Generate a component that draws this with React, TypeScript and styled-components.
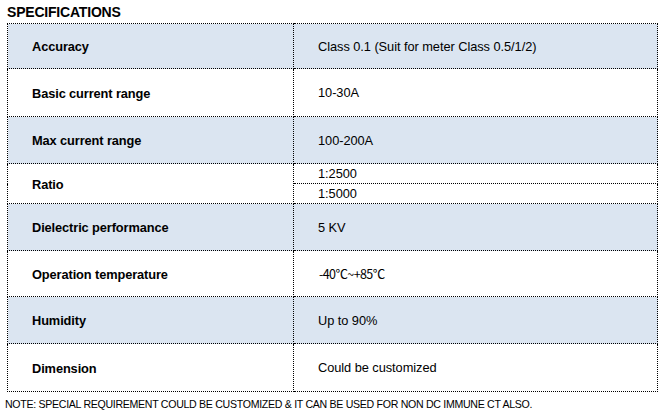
import * as React from "react";
import styled, { createGlobalStyle } from "styled-components";

const GlobalStyle = createGlobalStyle`
  html, body {
    margin: 0;
    padding: 0;
    background: #ffffff;
  }
  body {
    font-family: "Liberation Sans", Arial, sans-serif;
    color: #000;
  }
`;

const SPage = styled.div`
  width: 667px;
  height: 414px;
  padding: 4px 0 0 7px;
  box-sizing: border-box;
  overflow: hidden;
`;

const STitle = styled.h2`
  margin: 0 0 3px;
  font-size: 14px;
  font-weight: bold;
  line-height: 16px;
  letter-spacing: -0.2px;
`;

const STable = styled.table`
  border-collapse: collapse;
  width: 651px;
  table-layout: fixed;
`;

interface IRowStyle {
  shaded?: boolean;
}

const SRow = styled.tr<IRowStyle>`
  background: ${({ shaded }) => (shaded ? "#dbe5f1" : "#ffffff")};
`;

interface ICellStyle {
  h?: number;
}

const SLabel = styled.td<ICellStyle>`
  width: 286px;
  height: ${({ h }) => h || 46}px;
  padding: 1px 0 0 24px;
  box-sizing: border-box;
  border: 1px dotted #000;
  font-size: 12.8px;
  font-weight: bold;
  letter-spacing: -0.1px;
`;

const SValue = styled.td<ICellStyle>`
  height: ${({ h }) => h || 46}px;
  padding: 1px 0 0 24px;
  box-sizing: border-box;
  border: 1px dotted #000;
  font-size: 12.8px;
  line-height: 14px;
  letter-spacing: -0.05px;
`;

const STemp = styled.span`
  font-family: "Noto Sans CJK SC", "DejaVu Sans", sans-serif;
  font-size: 12.5px;
  letter-spacing: -0.6px;
  padding-left: 1px;
`;

const SNote = styled.p`
  margin: 6px 0 0 -2px;
  font-size: 10.6px;
  letter-spacing: -0.3px;
  line-height: 12px;
`;

interface ISpec {
  label: string;
  value: React.ReactNode;
  h: number;
}

const specs: ISpec[] = [
  { label: "Accuracy", value: "Class 0.1 (Suit for meter Class 0.5/1/2)", h: 45 },
  { label: "Basic current range", value: "10-30A", h: 48 },
  { label: "Max current range", value: "100-200A", h: 47 },
];

const specsAfter: ISpec[] = [
  { label: "Dielectric performance", value: "5 KV", h: 47 },
  { label: "Operation temperature", value: <STemp>-40℃~+85℃</STemp>, h: 46 },
  { label: "Humidity", value: "Up to 90%", h: 47 },
  { label: "Dimension", value: "Could be customized", h: 48 },
];

const App = () => (
  <SPage>
    <GlobalStyle />
    <STitle>SPECIFICATIONS</STitle>
    <STable>
      <tbody>
        {specs.map((s, i) => (
          <SRow key={s.label} shaded={i % 2 === 0}>
            <SLabel h={s.h}>{s.label}</SLabel>
            <SValue h={s.h}>{s.value}</SValue>
          </SRow>
        ))}
        <SRow>
          <SLabel rowSpan={2} h={40}>
            Ratio
          </SLabel>
          <SValue h={20}>1:2500</SValue>
        </SRow>
        <SRow>
          <SValue h={20}>1:5000</SValue>
        </SRow>
        {specsAfter.map((s, i) => (
          <SRow key={s.label} shaded={i % 2 === 0}>
            <SLabel h={s.h}>{s.label}</SLabel>
            <SValue h={s.h}>{s.value}</SValue>
          </SRow>
        ))}
      </tbody>
    </STable>
    <SNote>
      NOTE: SPECIAL REQUIREMENT COULD BE CUSTOMIZED &amp; IT CAN BE USED FOR NON DC IMMUNE CT ALSO.
    </SNote>
  </SPage>
);

export default App;
